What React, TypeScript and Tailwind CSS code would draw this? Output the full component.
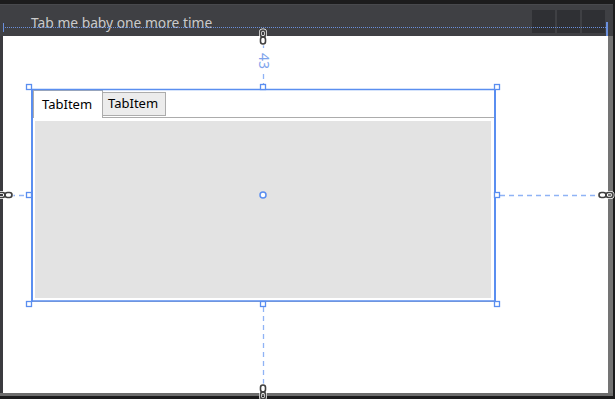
const font = { fontFamily: '"Noto Sans", "Open Sans", sans-serif' };

function Chain({ x, y, vertical }: { x: number; y: number; vertical?: boolean }) {
  return (
    <g transform={`translate(${x} ${y}) rotate(${vertical ? 0 : 90})`}>
      <rect x={-2.5} y={-7} width={5} height={7} rx={2.5} fill="none" stroke="#ffffff" strokeWidth={3} />
      <rect x={-2.5} y={0} width={5} height={7} rx={2.5} fill="none" stroke="#ffffff" strokeWidth={3} />
      <rect x={-2.5} y={-7} width={5} height={7} rx={2.5} fill="none" stroke="#404040" strokeWidth={1.6} />
      <rect x={-2.5} y={0} width={5} height={7} rx={2.5} fill="none" stroke="#404040" strokeWidth={1.6} />
    </g>
  );
}

function Adorners() {
  const handles = [
    [29, 87], [263, 87], [497, 87],
    [29, 195], [497, 195],
    [29, 304], [263, 304], [497, 304],
  ];
  return (
    <div className="pointer-events-none absolute inset-0 z-20">
      <svg width={615} height={399} className="absolute left-0 top-0">
        {/* selection outline */}
        <g stroke="#5a8ef0">
          <line x1={31} y1={89.5} x2={496} y2={89.5} strokeWidth={1.7} />
          <line x1={31} y1={301} x2={496} y2={301} strokeWidth={1.7} />
          <line x1={32} y1={89} x2={32} y2={302} strokeWidth={2} />
          <line x1={495} y1={89} x2={495} y2={302} strokeWidth={2} />
        </g>
        {/* margin guides */}
        <g stroke="#8fb3f5" strokeWidth={1.3} strokeDasharray="5 4">
          <line x1={263.5} y1={43} x2={263.5} y2={50} />
          <line x1={263.5} y1={74} x2={263.5} y2={84} />
          <line x1={263.5} y1={307} x2={263.5} y2={384} />
          <line x1={500} y1={195.5} x2={598} y2={195.5} />
          <line x1={10} y1={195.5} x2={26} y2={195.5} />
        </g>
        <Chain x={263} y={37} vertical />
        <Chain x={263} y={392} vertical />
        <Chain x={5} y={195} />
        <Chain x={606} y={195} />
        {handles.map(([hx, hy]) => (
          <rect key={`${hx}-${hy}`} x={hx - 2.5} y={hy - 2.5} width={5} height={5} fill="#ffffff" stroke="#5a8ef0" strokeWidth={1.3} />
        ))}
        <circle cx={263} cy={195} r={3} fill="#ffffff" stroke="#5a8ef0" strokeWidth={1.5} />
      </svg>
      <span
        className="absolute left-[254px] top-[54px] block w-[20px] rotate-90 text-center text-[14px] leading-[14px] text-[#7ea3ec]"
        style={font}
      >
        43
      </span>
    </div>
  );
}

function TitleBar() {
  return (
    <div className="relative flex h-[32px] w-[613px] items-start justify-between border-t border-[#48494d] bg-[#3f4044] pl-[31px] pr-[8px]">
      <span className="mt-[9px] text-[13.8px] leading-[18px] text-[#cbcbcb]" style={font}>
        Tab me baby one more time
      </span>
      <div className="mt-[5px] flex gap-[2px]">
        <div className="h-[23px] w-[23px] bg-[#2f3034]" />
        <div className="h-[23px] w-[23px] bg-[#2f3034]" />
        <div className="h-[23px] w-[23px] bg-[#2f3034]" />
      </div>
      <div className="absolute left-[3px] right-[5px] top-[22px] border-t border-dotted border-[#6a8fdc]" />
      <div className="absolute left-[3px] top-[18px] h-[9px] w-px bg-[#6a8fdc]" />
      <div className="absolute right-[5px] top-[17px] h-[14px] w-[2px] bg-[#6a8fdc]" />
    </div>
  );
}

function TabControl() {
  return (
    <div className="flex h-[213px] w-[465px] flex-col" style={font}>
      <div className="relative z-10 flex h-[28px] items-end pl-[2px]">
        <div className="-mb-px flex h-[28px] w-[70px] items-center border border-b-0 border-[#acacac] bg-white pl-[8px] text-[13px] text-black">
          TabItem
        </div>
        <div className="-ml-px mb-px flex h-[24px] w-[64px] items-center border border-[#acacac] bg-[#ececec] pl-[5px] text-[13px] text-black">
          TabItem
        </div>
      </div>
      <div className="flex-1 border border-[#acacac] bg-white p-[3px] pr-[4px]">
        <div className="h-full w-full bg-[#e3e3e3]" />
      </div>
    </div>
  );
}

export default function App() {
  return (
    <div className="relative h-[399px] w-[615px] overflow-hidden bg-[#1c1c1d]">
      <div className="h-[4px]" />
      <TitleBar />
      <div className="flex h-[357px] w-[613px]">
        <div className="w-[3px] bg-[#3b3b3f]" />
        <div className="flex-1 bg-white pl-[28px] pt-[53px]">
          <TabControl />
        </div>
        <div className="w-[5px] bg-[#747474]" />
      </div>
      <div className="h-[3px] w-[613px] bg-[#6d6d6d]" />
      <Adorners />
    </div>
  );
}
